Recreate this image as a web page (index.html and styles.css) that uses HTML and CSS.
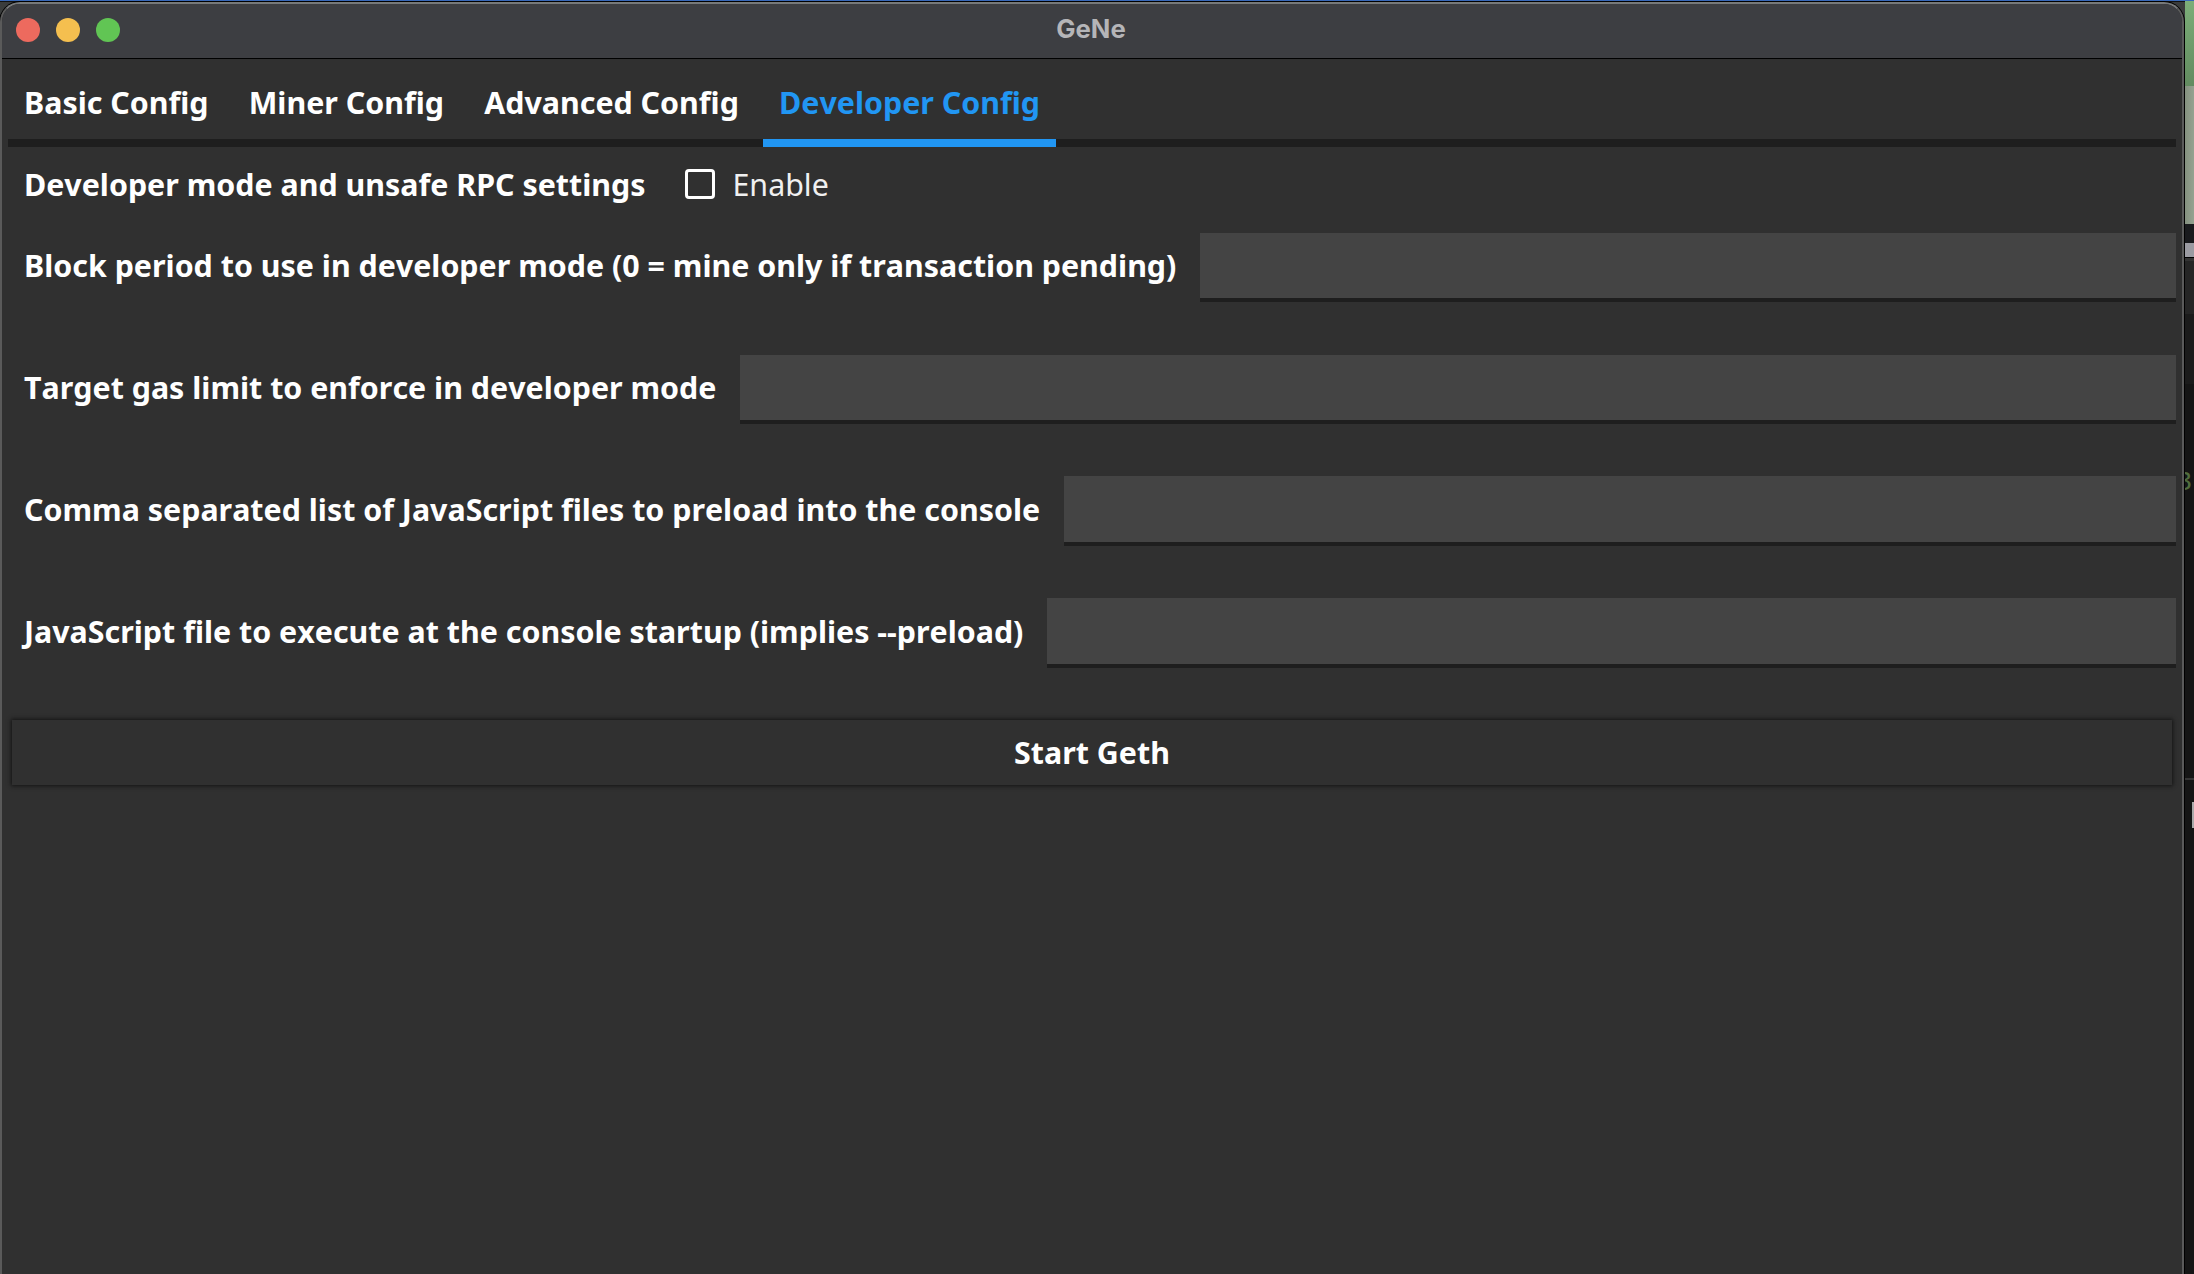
FILE: index.html
```html
<!DOCTYPE html>
<html lang="en">
<head>
<meta charset="utf-8">
<title>GeNe</title>
<link rel="stylesheet" href="styles.css">
</head>
<body>
<div class="desktop">
  <div class="window">
    <header class="titlebar">
      <div class="lights"><span class="light close"></span><span class="light minimise"></span><span class="light zoom"></span></div>
      <h1 class="title">GeNe</h1>
    </header>
    <main class="content">
      <nav class="tabs">
        <a class="tab">Basic Config</a>
        <a class="tab">Miner Config</a>
        <a class="tab">Advanced Config</a>
        <a class="tab active">Developer Config</a>
      </nav>
      <form class="form">
        <div class="toggle-row">
          <span class="label">Developer mode and unsafe RPC settings</span>
          <span class="box"></span>
          <span class="enable">Enable</span>
        </div>
        <div class="row"><label class="label" for="period">Block period to use in developer mode (0 = mine only if transaction pending)</label><input class="entry short" id="period"></div>
        <div class="row tight"><label class="label" for="gas">Target gas limit to enforce in developer mode</label><input class="entry short" id="gas"></div>
        <div class="row tall"><label class="label" for="preload">Comma separated list of JavaScript files to preload into the console</label><input class="entry" id="preload"></div>
        <div class="row tall"><label class="label" for="exec">JavaScript file to execute at the console startup (implies --preload)</label><input class="entry" id="exec"></div>
        <button class="start" type="button">Start Geth</button>
      </form>
    </main>
  </div>
  <aside class="behind">
    <div class="hill"></div>
    <div class="field"></div>
    <div class="gap"></div>
    <div class="bar"></div>
    <div class="panel-top"></div>
    <div class="terminal"><span class="digit">3</span></div>
    <div class="prompt"><span class="cursor"></span></div>
  </aside>
</div>
</body>
</html>
```
FILE: styles.css
```css
* { box-sizing: border-box; }
body {
  margin: 0;
  height: 1274px;
  overflow: hidden;
  background: #151515;
  font: bold 30.38px/42px "Noto Sans", sans-serif;
  font-kerning: none;
  color: #fff;
}
.desktop {
  display: flex;
  height: 1274px;
  border-top: 1px solid #3868b8;
  background: linear-gradient(#111 0 1px, #3a3c3c 1px 24px, #151515 24px);
}
.window {
  display: flex;
  flex-direction: column;
  width: 2184px;
  height: 1300px;
  margin-top: 1px;
  flex: none;
  border: 2px solid #5a5a5a;
  border-top-color: #77797a;
  border-radius: 20px;
  background: #303030;
  box-shadow: 0 0 0 1px #000;
  overflow: hidden;
}
.titlebar {
  display: grid;
  grid-template-columns: 186px 1fr 202px;
  align-items: center;
  height: 55px;
  flex: none;
  padding-left: 14px;
  background: #3d3e42;
  border-bottom: 1px solid #000;
}
.lights { display: flex; gap: 16px; padding-bottom: 2px; }
.light { width: 24px; height: 24px; border-radius: 50%; }
.close { background: #ed6a5e; }
.minimise { background: #f5bf4f; }
.zoom { background: #61c554; }
.title {
  margin: 0;
  padding-bottom: 4px;
  font: bold 25.7px/32px Inter, sans-serif;
  color: #b5b5b8;
  text-align: center;
}
.content { padding: 0 6px; }
.tabs {
  display: flex;
  height: 88px;
  padding-top: 19px;
  border-bottom: 8px solid #1e1e1e;
}
.tab { height: 69px; padding: 4px 16px 0; margin-right: 8.2px; white-space: nowrap; }
.active { color: #2196f3; border-bottom: 8px solid #2196f3; }
.form { display: flex; flex-direction: column; }
.toggle-row { display: flex; align-items: center; height: 74px; padding: 0 0 0 16px; }
.toggle-row .label, .enable { padding-top: 1px; }
.box { width: 30px; height: 30px; margin-left: 40px; border: 3px solid #fff; border-radius: 4px; }
.enable { margin-left: 17px; font-weight: 400; color: #f0f0f0; }
.label { white-space: nowrap; }
.row { display: flex; align-items: flex-start; height: 122px; padding: 12px 0 0 16px; }
.tight { height: 121px; }
.row .label { margin-right: 24px; padding-top: 12px; }
.tall .label { padding-top: 13px; }
.entry {
  flex: 1;
  min-width: 0;
  height: 70px;
  padding: 0 16px;
  border: 0;
  border-bottom: 4px solid #1e1e1e;
  border-radius: 0;
  background: #444;
  color: #fff;
  font: inherit;
}
.short { height: 69px; }
.start {
  height: 65px;
  margin: 12px 4px 0;
  padding: 0;
  border: 0;
  background: #303030;
  color: #fff;
  font: inherit;
  box-shadow: 0 0 4px 1px #141414;
}
.behind { flex: 1; margin-left: 1px; display: flex; flex-direction: column; }
.hill { height: 85px; background: linear-gradient(#7cae78, #628b60); }
.field { height: 138px; background: linear-gradient(90deg, #84907f, #95a391); }
.gap { height: 19px; background: #191a1d; }
.bar { height: 14px; background: #9b9ba2; }
.panel-top { height: 4px; background: #333; border-top: 1px solid #000; }
.terminal { height: 421px; flex: none; padding-top: 201px; background: linear-gradient(#252525 0 53px, #1b1b1b 53px 123px, #151515 123px); overflow: hidden; height: 517px; }
.digit { display: block; margin-left: -9px; font: 27px/42px "Liberation Mono", monospace; color: #516d3e; }
.prompt { flex: 1; padding-top: 22px; border-top: 2px solid #353535; background: #151515; }
.cursor { display: block; width: 2px; height: 26px; margin-left: 7px; background: #aaa; }
```
